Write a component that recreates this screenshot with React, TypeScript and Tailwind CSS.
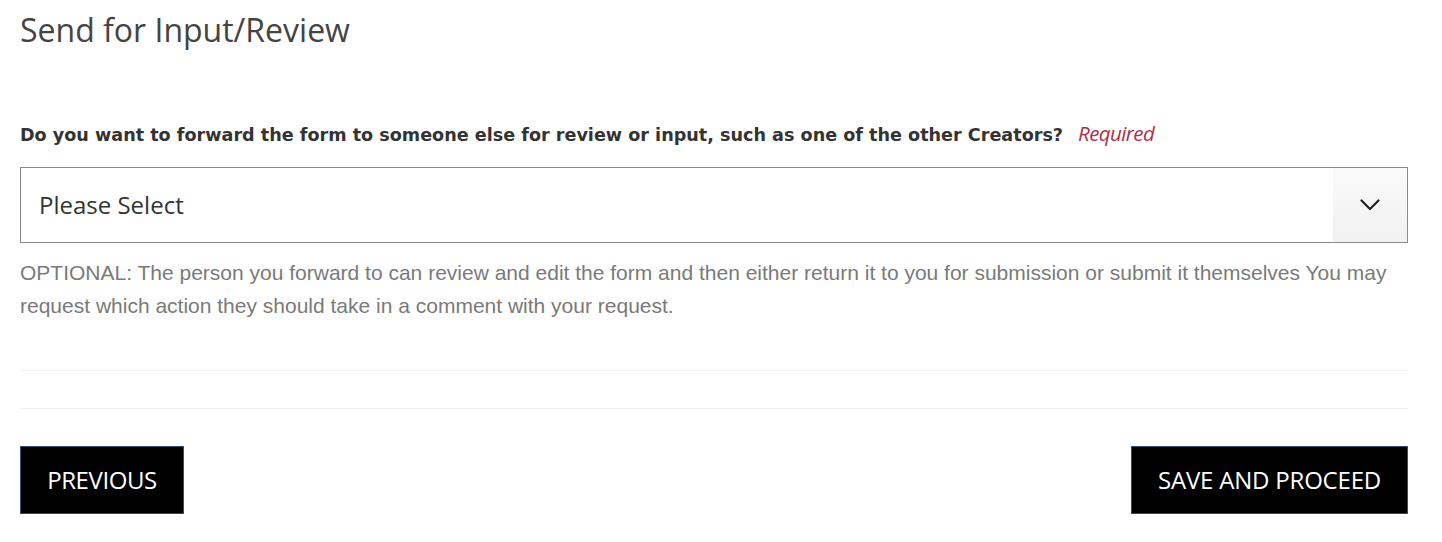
export default function App() {
  return (
    <div className="min-h-screen bg-white pl-5 pr-[34px] pt-[10px]">
      <h1 className="font-['Open_Sans',sans-serif] text-[32px] leading-10 text-[#444]">
        Send for Input/Review
      </h1>

      <div className="mt-[71px]">
        <label className="flex items-baseline gap-[15px] font-['DejaVu_Sans',Verdana,sans-serif] text-[17.6px] font-bold leading-6 text-[#333]">
          <span>
            Do you want to forward the form to someone else for review or
            input, such as one of the other Creators?
          </span>
          <span className="font-['Open_Sans',sans-serif] text-[20.5px] font-normal italic tracking-[-0.6px] text-[#b32d47]">
            Required
          </span>
        </label>

        <div className="mt-5 flex h-[76px] items-stretch border border-[#8a8a8a]">
          <div className="flex flex-1 items-center pl-[18px] font-['Open_Sans',sans-serif] text-[24px] text-[#333]">
            Please Select
          </div>
          <div className="flex w-[74px] items-center justify-center bg-gradient-to-b from-[#fafafa] to-[#f1f1f1]">
            <svg width="20" height="12" viewBox="0 0 20 12" fill="none">
              <polyline
                points="1.5,1.5 10,10 18.5,1.5"
                stroke="#222"
                strokeWidth="2.2"
                strokeLinecap="round"
                strokeLinejoin="round"
              />
            </svg>
          </div>
        </div>

        <p className="mt-[13px] font-['Liberation_Sans',Arial,sans-serif] text-[21px] leading-[33px] text-[#7a7a7a]">
          OPTIONAL: The person you forward to can review and edit the form and
          then either return it to you for submission or submit it themselves
          You may request which action they should take in a comment with your
          request.
        </p>
      </div>

      <div className="mt-[48px] border-t border-[#f3f3f3]" />
      <div className="mt-[37px] border-t border-[#ececec]" />

      <div className="mt-[37px] flex justify-between">
        <button className="h-[68px] w-[164px] border border-[#2f4d6e] bg-black font-['Open_Sans',sans-serif] text-[24px] tracking-[-0.4px] text-white">
          PREVIOUS
        </button>
        <button className="h-[68px] w-[277px] border border-[#2f4d6e] bg-black font-['Open_Sans',sans-serif] text-[24px] tracking-[-0.2px] text-white">
          SAVE AND PROCEED
        </button>
      </div>
    </div>
  );
}
